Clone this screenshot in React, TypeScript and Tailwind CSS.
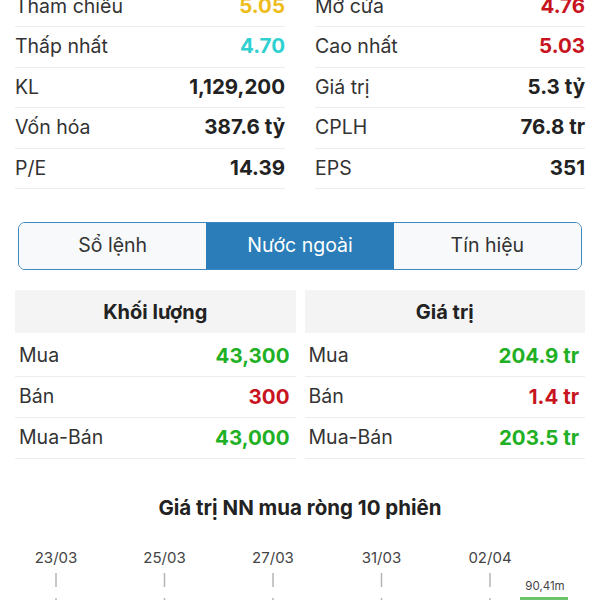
import React from 'react';

const font = { fontFamily: 'Inter, "Noto Sans", sans-serif' };

type Stat = { label: string; value: string; color?: string };

const leftStats: Stat[] = [
  { label: 'Tham chiếu', value: '5.05', color: 'text-[#eebd1c]' },
  { label: 'Thấp nhất', value: '4.70', color: 'text-[#2fd0d0]' },
  { label: 'KL', value: '1,129,200' },
  { label: 'Vốn hóa', value: '387.6 tỷ' },
  { label: 'P/E', value: '14.39' },
];

const rightStats: Stat[] = [
  { label: 'Mở cửa', value: '4.76', color: 'text-[#c8141e]' },
  { label: 'Cao nhất', value: '5.03', color: 'text-[#c8141e]' },
  { label: 'Giá trị', value: '5.3 tỷ' },
  { label: 'CPLH', value: '76.8 tr' },
  { label: 'EPS', value: '351' },
];

const volumeRows: Stat[] = [
  { label: 'Mua', value: '43,300', color: 'text-[#1fb025]' },
  { label: 'Bán', value: '300', color: 'text-[#c8141e]' },
  { label: 'Mua-Bán', value: '43,000', color: 'text-[#1fb025]' },
];

const valueRows: Stat[] = [
  { label: 'Mua', value: '204.9 tr', color: 'text-[#1fb025]' },
  { label: 'Bán', value: '1.4 tr', color: 'text-[#c8141e]' },
  { label: 'Mua-Bán', value: '203.5 tr', color: 'text-[#1fb025]' },
];

const StatColumn: React.FC<{ items: Stat[] }> = ({ items }) => (
  <div className="flex flex-col">
    {items.map((s) => (
      <div key={s.label} className="h-[40.5px] flex items-center justify-between border-b border-[#ececec]">
        <span className="text-[19.5px] text-[#333]">{s.label}</span>
        <span className={`text-[20.5px] font-bold ${s.color ?? 'text-[#222]'}`}>{s.value}</span>
      </div>
    ))}
  </div>
);

const ForeignTable: React.FC<{ title: string; rows: Stat[] }> = ({ title, rows }) => (
  <div className="flex flex-col">
    <div className="h-[43px] bg-[#f4f4f4] flex items-center justify-center text-[20px] font-bold text-[#222]">
      {title}
    </div>
    <div className="mt-[3px] flex flex-col">
      {rows.map((r) => (
        <div key={r.label} className="h-[41px] flex items-center justify-between pl-[4px] pr-[6px] border-b border-[#ececec]">
          <span className="text-[19.5px] text-[#333]">{r.label}</span>
          <span className={`text-[20.5px] font-bold ${r.color}`}>{r.value}</span>
        </div>
      ))}
    </div>
  </div>
);

const tabs = ['Sổ lệnh', 'Nước ngoài', 'Tín hiệu'];
const dates = ['23/03', '25/03', '27/03', '31/03', '02/04'];

export default function App() {
  return (
    <div className="w-[600px] h-[600px] overflow-hidden bg-white" style={font}>
      <div className="-mt-[13.5px] grid grid-cols-2 gap-x-[30px] px-[15px]">
        <StatColumn items={leftStats} />
        <StatColumn items={rightStats} />
      </div>

      <div className="mt-[33px] mx-[18px] h-[48px] flex rounded-[7px] border border-[#3b88c0] overflow-hidden">
        {tabs.map((t, i) => (
          <div
            key={t}
            className={`flex-1 flex items-center justify-center text-[19.5px] ${
              i === 1 ? 'bg-[#2a7db8] text-white' : 'bg-[#f8f9fa] text-[#333]'
            }`}
          >
            {t}
          </div>
        ))}
      </div>

      <div className="mt-[20px] grid grid-cols-2 gap-x-[9px] px-[15px]">
        <ForeignTable title="Khối lượng" rows={volumeRows} />
        <ForeignTable title="Giá trị" rows={valueRows} />
      </div>

      <div className="mt-[34px] text-center text-[20.5px] font-bold text-[#222]">Giá trị NN mua ròng 10 phiên</div>

      <svg width="600" height="80" className="mt-[14px] block">
        {dates.map((d, i) => {
          const x = 56 + i * 108.5;
          return (
            <g key={d}>
              <text x={x} y={25} textAnchor="middle" fontSize="15" fill="#444" style={font}>
                {d}
              </text>
              <line x1={x} y1={35} x2={x} y2={49} stroke="#b5b5b5" strokeWidth="1.5" />
              <line x1={x} y1={60} x2={x} y2={80} stroke="#b5b5b5" strokeWidth="1.5" />
            </g>
          );
        })}
        <text x={545} y={52} textAnchor="middle" fontSize="11.5" fill="#444" style={font}>
          90,41m
        </text>
        <rect x={520} y={59} width={48} height={21} fill="#6cc46c" />
      </svg>
    </div>
  );
}
